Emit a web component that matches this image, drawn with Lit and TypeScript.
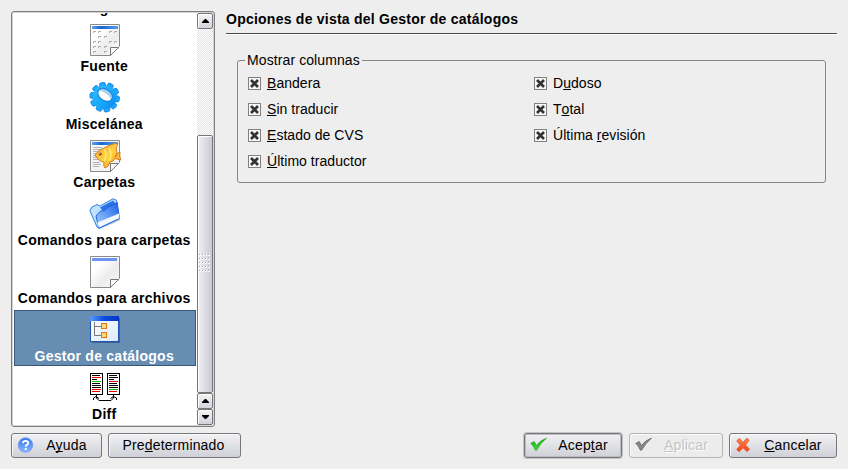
import { LitElement, html, css, svg } from "lit";
import { customElement, property } from "lit/decorators.js";

const accel = (label: string) => {
  const [before, key, after] = label.split("|");
  return key === undefined ? html`${before}` : html`${before}<u>${key}</u>${after}`;
};

const page = (fill: string) => svg`
  <path d="M1.5 .5H30.5V22.5L21.5 31.5H1.5Z" fill="${fill}" stroke="#8a8a8a"/>
  <path d="M21.5 31.5V23.5H29.5Z" fill="#f8f8f8" stroke="#777"/>`;

const dots: [number, number][] = [
  [4, 6], [9, 6], [20, 6], [25, 6], [9, 11], [15, 11], [4, 16], [9, 16], [20, 16], [25, 16],
  [4, 21], [9, 21], [15, 21], [4, 26], [15, 26],
];

const diffSheet = (x: number, rows: [string, number][]) => svg`
  <rect x="${x + 0.5}" y="1.5" width="12" height="21" fill="#fff" stroke="#000"/>
  ${rows.map(([c, w], i) => svg`<rect x="${x + 2}" y="${3 + i * 2}" width="${w}" height="1" fill="${c}"/>`)}`;

const K = "#000", R = "#f00000", G = "#00c000";

const icons: Record<string, unknown> = {
  none: svg``,
  font: svg`
    ${page("url(#paper)")}
    <rect x="3" y="2" width="26" height="3" fill="url(#bar)"/>
    ${dots.map(([x, y]) => svg`<path d="M${x + 0.5} ${y + 3}V${y + 1.5}H${x + 3}" fill="none" stroke="#aaa"/>`)}`,
  gear: svg`
    ${[0, 36, 72, 108, 144, 180, 216, 252, 288, 324].map((a) => svg`<rect x="-3" y="-14.8" width="6" height="7" rx="1.8" fill="#1ca8fc" stroke="#1682dc" stroke-width=".8" transform="translate(15.7 15.2) rotate(${a - 10})"/>`)}
    <circle cx="15.7" cy="15.2" r="11.8" fill="url(#gear)"/>
    <g transform="rotate(35 16 13)">
      <ellipse cx="16" cy="13" rx="8" ry="5.6" fill="#fff" stroke="#1b84dc" stroke-width="1.3"/>
      <path d="M8.8 12.5Q11 7.9 17 8.3T23.2 13Q17 9.5 8.8 12.5Z" fill="#a4d2f4"/>
    </g>`,
  fish: svg`
    ${page("#f4f4f4")}
    <rect x="3" y="2" width="26" height="3" fill="url(#bar)"/>
    <path d="M4 7.5H13M4 9.5H12M4 11.5H10M4 13.5H8M4 15.5H7M4 17.5H9M4 19.5H12M4 22.5H11M4 24.5H12M4 26.5H10" stroke="#b4b4b4"/>
    <path d="M6 15Q9 10 15 8Q21 4 29 3Q26 8 28 13Q27 17 26 17Q29 12 31 12Q30 16 32 20Q29 20 26 18Q25 22 21 22Q20 27 16 28Q14 26 15 22Q9 21 6 15Z" fill="url(#fish)" stroke="#c87824" stroke-width=".9"/>
    <path d="M15 9Q19 14 15 21M20 8Q24 14 20 21" fill="none" stroke="#fff08a" stroke-width="1.8" opacity=".75"/>
    <circle cx="11.2" cy="14" r="1.5" fill="#6b502c"/><circle cx="10.8" cy="13.6" r=".5" fill="#fff"/>`,
  folder: svg`
    <path d="M11 31.5L31 22V20Z" fill="#888" opacity=".5"/>
    <path d="M.8 12.5L3 9L8 6.5L11 8L24 .8L27 2L28 4L30 21L10 30.5L8 29Z" fill="#bfe0ff" stroke="#2b7fe0"/>
    <path d="M11 9.5L24 2.5L27 6L14 13Z" fill="#2a72ea"/>
    <path d="M7 18L11.5 13L16 12.5L18.5 9.5L28 4.5L30.5 20L10 30Z" fill="url(#folder)" stroke="#1e63d8"/>
    <path d="M8.3 24.5L30 15.5L30.4 20L10 29.6Z" fill="#f2f7ff"/>`,
  sheet: svg`
    ${page("url(#paper)")}
    <rect x="3" y="2" width="25" height="3" fill="#6f94f0"/>`,
  tree: svg`
    <rect x="3" y="4" width="28" height="25" fill="#27486e" opacity=".6"/>
    <rect x="1.5" y="2.5" width="28" height="25" fill="url(#win)" stroke="#1d55b4"/>
    <rect x="1" y="2" width="29" height="5" fill="url(#winbar)"/>
    <path d="M5.5 8V21.5H12M5.5 12.5H12" fill="none" stroke="#777"/>
    <rect x="12.5" y="9.5" width="5" height="5" fill="#ffd97a" stroke="#e07a10"/>
    <rect x="12.5" y="18.5" width="5" height="5" fill="#ffd97a" stroke="#e07a10"/>`,
  diff: svg`
    ${diffSheet(1, [[K, 8], [R, 9], [K, 5], [G, 9], [K, 8], [K, 9], [K, 9], [R, 9], [R, 8]])}
    ${diffSheet(18, [[K, 8], [K, 9], [K, 5], [R, 9], [K, 8], [K, 9], [K, 9], [G, 9], [R, 8]])}
    <path d="M7.5 23V26L10 28.5H22L24.5 26V23M4.5 28V26L7 24.5L10 26.5M21.5 26.5L24.5 24.5L27.5 26V28" fill="none" stroke="#000"/>`,
};

const gradients = svg`
  <defs>
    <linearGradient id="paper" x1="0" y1="0" x2="1" y2="1"><stop offset="0" stop-color="#fff"/><stop offset=".3" stop-color="#fff"/><stop offset=".6" stop-color="#ececec"/><stop offset="1" stop-color="#fafafa"/></linearGradient>
    <linearGradient id="bar"><stop offset="0" stop-color="#5ca0f0"/><stop offset=".35" stop-color="#1766d0"/><stop offset="1" stop-color="#5a9aee"/></linearGradient>
    <linearGradient id="gear" x1="0" y1="0" x2="1" y2="1"><stop offset="0" stop-color="#2cc0ff"/><stop offset=".6" stop-color="#18a6fc"/><stop offset="1" stop-color="#0a80f0"/></linearGradient>
    <linearGradient id="fish" x1="0" y1="0" x2="1" y2="1"><stop offset="0" stop-color="#ff9c3c"/><stop offset=".5" stop-color="#ffd23c"/><stop offset="1" stop-color="#ff9020"/></linearGradient>
    <linearGradient id="folder" x1="0" y1="1" x2="1" y2="0"><stop offset="0" stop-color="#a8d8ff"/><stop offset="1" stop-color="#1a5ce8"/></linearGradient>
    <linearGradient id="win" x1="0" y1="0" x2="1" y2="1"><stop offset="0" stop-color="#fff"/><stop offset="1" stop-color="#dfe8fa"/></linearGradient>
    <linearGradient id="winbar"><stop offset="0" stop-color="#5a9cf8"/><stop offset=".5" stop-color="#0a4ae0"/><stop offset="1" stop-color="#0538c0"/></linearGradient>
    <linearGradient id="ball" x1="0" y1="0" x2="0" y2="1"><stop offset="0" stop-color="#3a78e8"/><stop offset="1" stop-color="#86b4ff"/></linearGradient>
    <linearGradient id="ok" x1="0" y1="0" x2="0" y2="1"><stop offset="0" stop-color="#12b012"/><stop offset="1" stop-color="#3ede3e"/></linearGradient>
    <linearGradient id="no" x1="0" y1="0" x2="0" y2="1"><stop offset="0" stop-color="#ff8a50"/><stop offset="1" stop-color="#f83a10"/></linearGradient>
  </defs>`;

const tick = "M.8 6.2L4.3 4.6L6.4 8.6Q10.5 3 16.4 1.2Q10.5 6 6.6 13.2L5.4 13.2Q3.6 9 .8 6.2Z";
const buttonIcons: Record<string, unknown> = {
  help: svg`
    <circle cx="8.5" cy="8" r="7.3" fill="url(#ball)" stroke="#6d9cf0" stroke-width=".7"/>
    <path d="M5.9 6.2Q6.1 3.9 8.6 3.9Q11.2 4 11.2 6.1Q11.1 7.3 9.6 8.1Q8.7 8.7 8.7 9.8" fill="none" stroke="#fff" stroke-width="1.8"/>
    <rect x="7.7" y="11" width="2" height="2" fill="#fff"/>`,
  ok: svg`<path d="${tick}" fill="url(#ok)" stroke="#12a012" stroke-width=".6"/>`,
  apply: svg`<path d="${tick}" fill="#888" stroke="#5c5c5c" stroke-width=".7"/>`,
  cancel: svg`<path d="M1.7 3.8L4.5 1.4L7.9 5.4L11.8 1.2L14.1 3.2L10.5 7.9L14.5 12.2L12.1 14.6L8 10.8L4.1 14.8L1.7 12.4L5.3 8.2Z" fill="url(#no)" stroke="#e05028" stroke-width=".8"/>`,
};

@customElement("page-list")
class PageList extends LitElement {
  static styles = css`
    :host { display: flex; flex: none; box-sizing: border-box; width: 204px; height: 416px; border: 1px solid #7f7f82; border-radius: 3px; background: #fff; box-shadow: inset 0 0 0 1px #d4d4d4; padding: 1px; }
    .items { width: 184px; overflow: hidden; display: flex; flex-direction: column; gap: 2px; padding: 0 1px; box-sizing: border-box; }
    .item { flex: none; box-sizing: border-box; width: 182px; height: 56px; padding-top: 4px; border: 0 solid #385878; display: flex; flex-direction: column; align-items: center; color: #000; font-weight: bold; }
    .item:first-child { margin-top: -51px; }
    .on { background: #678db2; color: #fff; border-width: 1px; padding-top: 3px; }
    .item svg { display: block; width: 32px; height: 32px; flex: none; }
    .name { line-height: 18px; margin-top: 1px; white-space: nowrap; letter-spacing: .25px; margin-right: 1.5px; }
    .bar { width: 16px; display: flex; flex-direction: column; background: repeating-conic-gradient(#e2e2e2 0 25%, #fff 0 50%) 0 0 / 2px 2px; }
    .btn { box-sizing: border-box; height: 16px; border: 1px solid #77777b; border-radius: 2px; background: linear-gradient(#f4f4f6, #d2d3da); display: flex; align-items: center; justify-content: center; box-shadow: inset 1px 1px #fff; }
    .btn svg { width: 7px; height: 4px; }
    .track { height: 106px; }
    .thumb { box-sizing: border-box; height: 258px; border: 1px solid #77777b; border-radius: 2px; background: linear-gradient(90deg, #f0f0f3, #c9cad2); box-shadow: inset 1px 1px #fff; display: flex; align-items: center; justify-content: center; }
    .grip { width: 12px; height: 20px; background: conic-gradient(from 270deg at 1px 1px, #a0a0a8 90deg, transparent 0) 0 0 / 3px 4px, conic-gradient(from 270deg at 2px 2px, #fafafc 90deg, transparent 0) 0 0 / 3px 4px; }
  `;
  render() {
    const items = [["none", "Ortografía"], ["font", "Fuente"], ["gear", "Miscelánea"], ["fish", "Carpetas"],
      ["folder", "Comandos para carpetas"], ["sheet", "Comandos para archivos"], ["tree", "Gestor de catálogos"], ["diff", "Diff"]];
    const up = html`<div class="btn"><svg viewBox="0 0 7 4"><path d="M3 0H4L7 3V4H0V3Z"/></svg></div>`;
    const down = html`<div class="btn"><svg viewBox="0 0 7 4"><path d="M3 4H4L7 1V0H0V1Z"/></svg></div>`;
    return html`
      <div class="items">
        ${items.map(([icon, name]) => html`
          <div class="item ${icon === "tree" ? "on" : ""}">
            <svg viewBox="0 0 32 32">${gradients}${icons[icon]}</svg>
            <div class="name">${name}</div>
          </div>`)}
      </div>
      <div class="bar">${up}<div class="track"></div><div class="thumb"><div class="grip"></div></div>${up}${down}</div>`;
  }
}

@customElement("check-item")
class CheckItem extends LitElement {
  @property() label = "";
  static styles = css`
    :host { display: flex; align-items: center; height: 26px; gap: 6px; white-space: nowrap; letter-spacing: .04px; font-kerning: none; }
    svg { width: 13px; height: 13px; flex: none; }
    u { text-decoration: underline 1px; text-underline-offset: 1px; text-decoration-skip-ink: none; }
  `;
  render() {
    return html`<svg viewBox="0 0 13 13">
        <rect x=".5" y=".5" width="12" height="12" fill="#f8f8f8" stroke="#808080"/>
        <path d="M3 3L10 10M10 3L3 10" stroke="#333" stroke-width="2.7"/>
      </svg><span>${accel(this.label)}</span>`;
  }
}

@customElement("push-button")
class PushButton extends LitElement {
  @property() label = "";
  @property() icon = "";
  static styles = css`
    :host { display: flex; align-items: center; box-sizing: border-box; height: 25px; padding-bottom: 1px; border: 1px solid #77777b; border-radius: 3px; background: linear-gradient(#f2f2f4, #d0d1d8); box-shadow: inset 1px 1px #fafafa; white-space: nowrap; }
    :host([default]) { box-shadow: 0 0 0 1px #c3c3c6, inset 0 0 0 1px #bbbbc2; }
    :host([disabled]) { border-color: #b4b4b4; background: #ececec; color: #c4c4c4; text-shadow: 1px 1px #fff; }
    svg { width: 17px; height: 16px; margin-left: 5px; flex: none; }
    .text { flex: 1; text-align: center; padding: 0 2px 1px 0; }
    u { text-decoration: underline 1px; text-underline-offset: 1px; text-decoration-skip-ink: none; }
  `;
  render() {
    return html`${this.icon ? html`<svg viewBox="0 0 17 16">${gradients}${buttonIcons[this.icon]}</svg>` : ""}
      <span class="text">${accel(this.label)}</span>`;
  }
}

@customElement("app-root")
class AppRoot extends LitElement {
  static styles = css`
    :host { display: flex; flex-direction: column; box-sizing: border-box; width: 848px; height: 469px; padding: 11px; background: #eee; color: #000; font: 14px/18px "Liberation Sans", Arial, sans-serif; letter-spacing: .17px; overflow: hidden; }
    .main { display: flex; gap: 11px; height: 416px; }
    .panel { flex: 1; min-width: 0; }
    .title { font-weight: bold; height: 22px; line-height: 16px; border-bottom: 1px solid #4a4a4e; box-shadow: 0 1px #fff; letter-spacing: .24px; }
    fieldset { margin: 17px 11px 0; height: 132px; box-sizing: border-box; border: 1px solid #858585; border-radius: 3px; padding: 1px 10px 0; min-width: 0; }
    legend { margin-left: -3px; padding: 0 2px; line-height: 18px; letter-spacing: .1px; }
    .columns { display: grid; grid-template-columns: 286px 1fr; }
    .actions { display: flex; gap: 6px; margin-top: 6px; }
    .space { flex: 1; }
    .w1 { width: 91px; } .w2 { width: 133px; } .w3 { width: 98px; margin-right: 1px; } .w4 { width: 94px; } .w5 { width: 108px; }
  `;
  render() {
    const left = ["|B|andera", "|S|in traducir", "|E|stado de CVS", "|Ú|ltimo traductor"];
    const right = ["D|u|doso", "T|o|tal", "Última |r|evisión"];
    return html`
      <div class="main">
        <page-list></page-list>
        <div class="panel">
          <div class="title">Opciones de vista del Gestor de catálogos</div>
          <fieldset>
            <legend>Mostrar columnas</legend>
            <div class="columns">
              <div>${left.map((l) => html`<check-item .label=${l}></check-item>`)}</div>
              <div>${right.map((l) => html`<check-item .label=${l}></check-item>`)}</div>
            </div>
          </fieldset>
        </div>
      </div>
      <div class="actions">
        <push-button class="w1" icon="help" .label=${"A|y|uda"}></push-button>
        <push-button class="w2" .label=${"Pre|d|eterminado"}></push-button>
        <div class="space"></div>
        <push-button class="w3" default icon="ok" .label=${"Acep|t|ar"}></push-button>
        <push-button class="w4" disabled icon="apply" .label=${"|A|plicar"}></push-button>
        <push-button class="w5" icon="cancel" .label=${"|C|ancelar"}></push-button>
      </div>`;
  }
}
